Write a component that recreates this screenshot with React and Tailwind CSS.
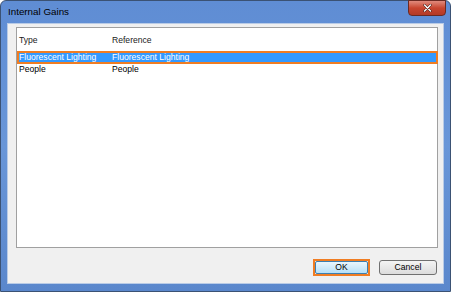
import React from 'react';

const rows = [
  { type: 'Fluorescent Lighting', ref: 'Fluorescent Lighting', selected: true },
  { type: 'People', ref: 'People' },
];

export default function App() {
  return (
    <div className="w-[451px] h-[292px] bg-white" style={{ fontFamily: '"Liberation Sans", Arial, sans-serif' }}>
      <div className="w-full h-full flex flex-col rounded-t-[6px] border border-[#3b5274] bg-gradient-to-b from-[#5f8dd4] via-[#6996d8] to-[#5a87cc] px-[6px] pb-[7px]">
        <div className="h-[22px] flex justify-between">
          <span className="pl-[1px] pt-[5px] text-[9.8px] leading-[12px] text-black">Internal Gains</span>
          <div className="w-[38px] h-[16px] -mt-[1px] -mr-[2px] rounded-b-[4px] border border-[#6b2a22] bg-gradient-to-b from-[#e08a7c] via-[#c8452f] to-[#b33a26] flex items-center justify-center">
            <svg width="9" height="8" viewBox="0 0 9 8">
              <path d="M1.5 1 L7.5 7 M7.5 1 L1.5 7" stroke="#3a1a14" strokeWidth="2.4" strokeLinecap="round" />
              <path d="M1.5 1 L7.5 7 M7.5 1 L1.5 7" stroke="#ffffff" strokeWidth="1.4" strokeLinecap="round" />
            </svg>
          </div>
        </div>
        <div className="flex-1 flex flex-col bg-[#f0f0f0] border border-[#b9cbe6] pl-[8px] pr-[5px] pt-[3px] pb-[7px]">
          <div className="flex-1 bg-white border border-[#a0a0a0] flex flex-col text-[8.6px] leading-[11px]">
            <div className="h-[23px] flex items-center pt-[2px] text-[#1a1a1a]">
              <span className="w-[95px] pl-[2px]">Type</span>
              <span>Reference</span>
            </div>
            <div className="flex flex-col">
              {rows.map((r) =>
                r.selected ? (
                  <div key={r.type} className="h-[13px] border-2 border-[#f07d23] bg-[#3399ff] text-white flex items-center -mr-[1px]">
                    <span className="w-[93px]">{r.type}</span>
                    <span>{r.ref}</span>
                  </div>
                ) : (
                  <div key={r.type} className="h-[10px] flex items-center text-black">
                    <span className="w-[95px] pl-[2px]">{r.type}</span>
                    <span>{r.ref}</span>
                  </div>
                )
              )}
            </div>
          </div>
          <div className="flex justify-end items-center gap-[9px] pt-[11px] pr-[1px] text-[8.6px]">
            <div className="border-2 border-[#f07d23] p-0">
              <div className="w-[53px] h-[13px] rounded-[2px] border border-[#3c7fb1] bg-gradient-to-b from-[#eaf6fd] to-[#b7e0f7] flex items-center justify-center text-black">
                OK
              </div>
            </div>
            <div className="w-[58px] h-[15px] rounded-[3px] border border-[#707070] bg-gradient-to-b from-[#f4f4f4] to-[#dcdcdc] flex items-center justify-center text-black">
              Cancel
            </div>
          </div>
        </div>
      </div>
    </div>
  );
}
